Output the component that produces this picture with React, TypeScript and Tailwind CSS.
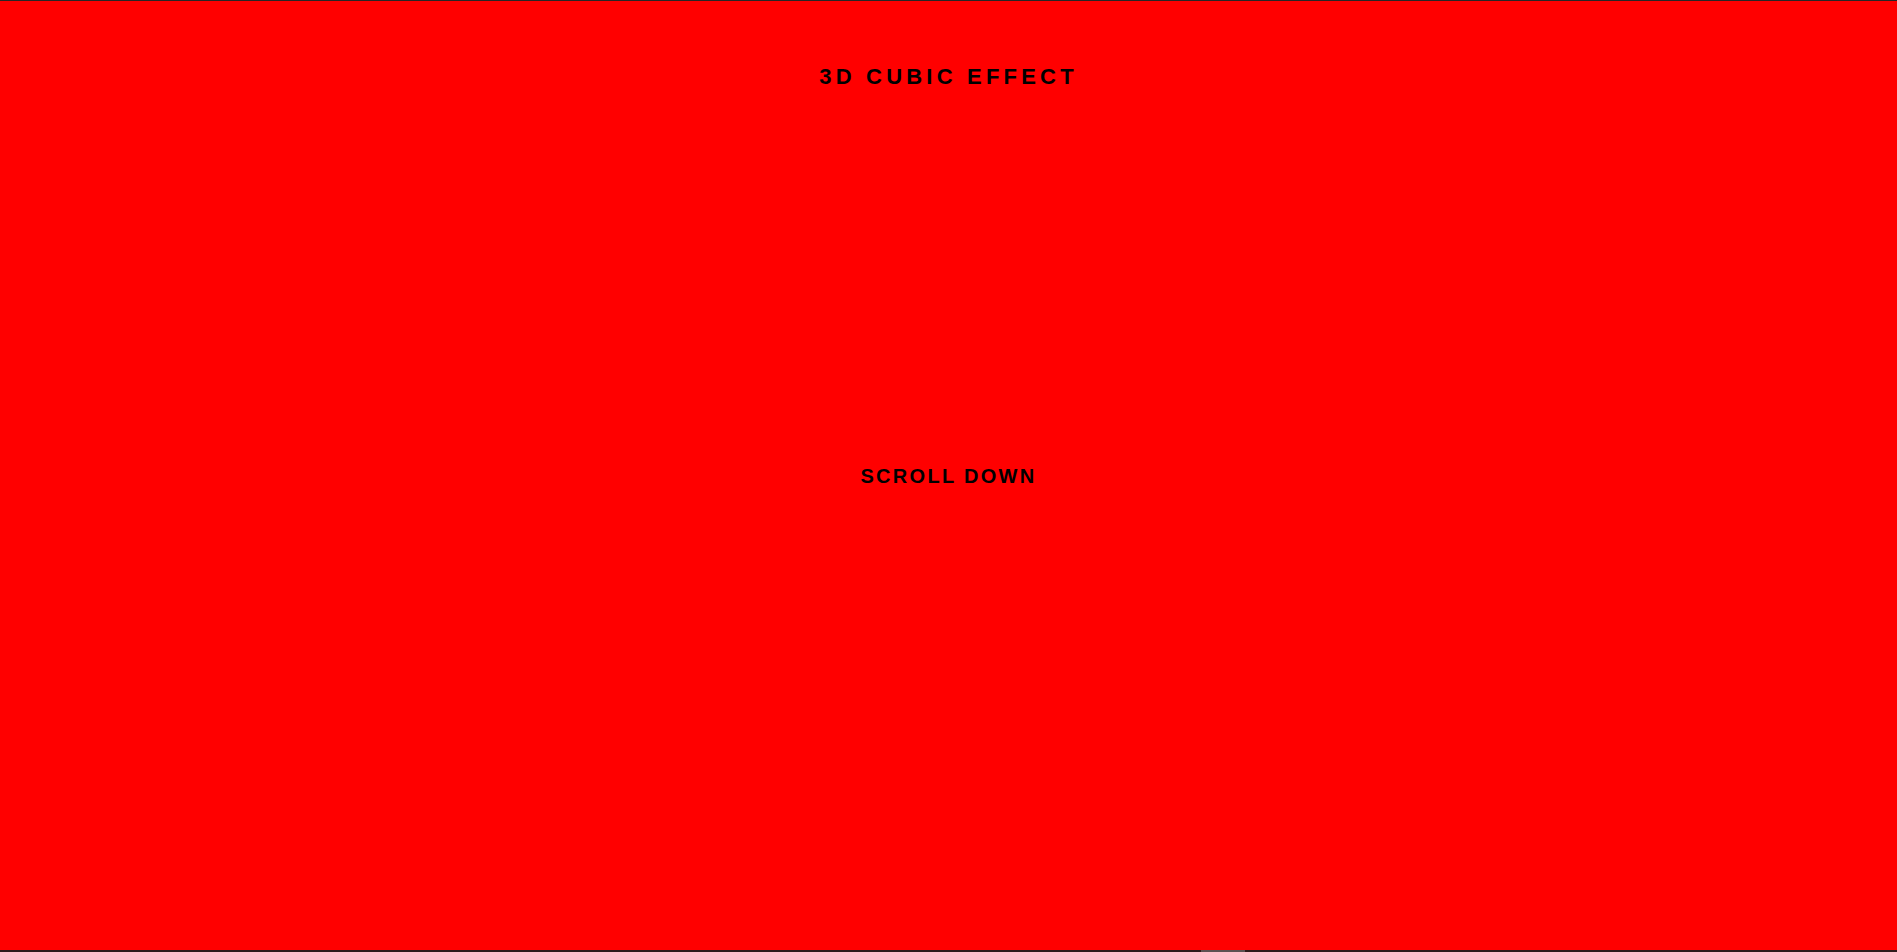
export default function App() {
  return (
    <div className="flex h-screen flex-col bg-[#241a1a] font-['Liberation_Sans',Arial,sans-serif] text-black">
      <div className="h-px bg-[#262626]" />
      <section className="grid flex-1 bg-[#ff0000]">
        <h1 className="col-start-1 row-start-1 self-start pt-[65px] text-center text-[22px] leading-none font-bold tracking-[4.2px]">
          3D CUBIC EFFECT
        </h1>
        <p className="col-start-1 row-start-1 self-center text-center text-[20px] leading-none font-bold tracking-[2.3px]">
          SCROLL DOWN
        </p>
      </section>
      <div className="flex h-[2px] bg-[#2e1a1a]">
        <div className="w-[1201px]" />
        <div className="w-[44px] bg-[#5c5252]" />
      </div>
    </div>
  );
}
